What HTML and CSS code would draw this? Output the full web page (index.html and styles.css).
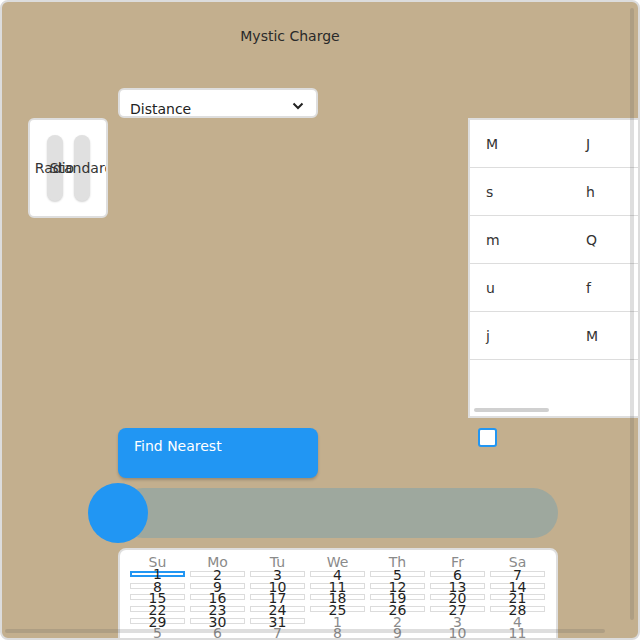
FILE: index.html
```html
<!DOCTYPE html>
<html>
<head>
<meta charset="utf-8">
<link rel="stylesheet" href="styles.css">
</head>
<body>
<div class="frame">
  <h1 class="title">Mystic Charge</h1>

  <div class="row-select">
    <div class="select">
      <span>Distance</span>
      <svg class="chevron" width="12" height="8" viewBox="0 0 12 8"><polyline points="1.5,1.5 6,6 10.5,1.5" fill="none" stroke="#222" stroke-width="2"/></svg>
    </div>
  </div>

  <div class="row-main">
    <div class="toggles">
      <div class="switch"><span>Radio</span></div>
      <div class="switch"><span>Standard</span></div>
    </div>
    <div class="list">
      <div class="grid">
        <div class="cell">M</div><div class="cell">J</div>
        <div class="cell">s</div><div class="cell">h</div>
        <div class="cell">m</div><div class="cell">Q</div>
        <div class="cell">u</div><div class="cell">f</div>
        <div class="cell">j</div><div class="cell">M</div>
      </div>
      <div class="list-thumb"></div>
    </div>
  </div>

  <div class="row-btn">
    <button class="btn">Find Nearest</button>
    <div class="check"></div>
  </div>

  <div class="slider">
    <div class="track"></div>
    <div class="thumb"></div>
  </div>

  <div class="calendar">
    <div class="cal-head">
      <span>Su</span><span>Mo</span><span>Tu</span><span>We</span><span>Th</span><span>Fr</span><span>Sa</span>
    </div>
    <div class="cal-grid">
      <div class="day sel">1</div><div class="day">2</div><div class="day">3</div><div class="day">4</div><div class="day">5</div><div class="day">6</div><div class="day">7</div>
      <div class="day">8</div><div class="day">9</div><div class="day">10</div><div class="day">11</div><div class="day">12</div><div class="day">13</div><div class="day">14</div>
      <div class="day">15</div><div class="day">16</div><div class="day">17</div><div class="day">18</div><div class="day">19</div><div class="day">20</div><div class="day">21</div>
      <div class="day">22</div><div class="day">23</div><div class="day">24</div><div class="day">25</div><div class="day">26</div><div class="day">27</div><div class="day">28</div>
      <div class="day">29</div><div class="day">30</div><div class="day">31</div><div class="day other">1</div><div class="day other">2</div><div class="day other">3</div><div class="day other">4</div>
      <div class="day other">5</div><div class="day other">6</div><div class="day other">7</div><div class="day other">8</div><div class="day other">9</div><div class="day other">10</div><div class="day other">11</div>
    </div>
  </div>

  <div class="vscroll"></div>
  <div class="hscroll"></div>
</div>
</body>
</html>
```

FILE: styles.css
```css
* { box-sizing: border-box; }
html, body { margin: 0; padding: 0; }
body {
  font-family: "DejaVu Sans", sans-serif;
  font-size: 14px;
  color: #222;
  background: #fff;
}
.frame {
  position: relative;
  width: 640px;
  height: 640px;
  border: 2px solid #dcdcdc;
  border-radius: 8px;
  background: #c3af8e;
  overflow: hidden;
}
.title {
  margin: 24px 0 0 0;
  width: 576px;
  text-align: center;
  font-size: 14px;
  font-weight: normal;
  line-height: 20px;
  height: 20px;
  color: #2a2a2a;
}
.row-select {
  margin-top: 42px;
  display: flex;
}
.select {
  margin-left: 116px;
  width: 200px;
  height: 30px;
  background: #fff;
  border: 2px solid #dedede;
  border-radius: 6px;
  padding: 10px 12px 0 10px;
  display: flex;
  justify-content: space-between;
  align-items: flex-start;
  align-self: flex-start;
  line-height: 18px;
  overflow: hidden;
  flex-shrink: 0;
}
.select span { height: 18px; display: block; }
.chevron { display: block; margin-top: 2px; }
.row-main {
  display: flex;
  align-items: flex-start;
}
.toggles {
  margin-left: 26px;
  width: 80px;
  height: 100px;
  flex-shrink: 0;
  background: #fff;
  border: 2px solid #dedede;
  border-radius: 6px;
  display: flex;
  justify-content: center;
  align-items: center;
  gap: 11px;
  overflow: hidden;
}
.switch {
  width: 16px;
  height: 66px;
  flex-shrink: 0;
  border-radius: 8px;
  background: #e0e0e0;
  box-shadow: 0 1px 2px rgba(0,0,0,0.18);
  display: flex;
  justify-content: center;
  align-items: center;
}
.switch span {
  white-space: nowrap;
  color: #333;
  flex-shrink: 0;
}
.list {
  position: relative;
  margin-left: 360px;
  width: 200px;
  height: 300px;
  background: #fff;
  border: 2px solid #dedede;
  flex-shrink: 0;
}
.grid {
  display: grid;
  grid-template-columns: 100px 100px;
}
.cell {
  height: 48px;
  border-bottom: 1px solid #dddddd;
  padding-left: 16px;
  display: flex;
  align-items: center;
  color: #333;
}
.list-thumb {
  position: absolute;
  left: 4px;
  bottom: 4px;
  width: 75px;
  height: 4px;
  border-radius: 2px;
  background: #d0d0d0;
}
.row-btn {
  margin-top: 10px;
  display: flex;
  align-items: flex-start;
}
.btn {
  margin-left: 116px;
  width: 200px;
  height: 50px;
  flex-shrink: 0;
  border: none;
  border-radius: 8px;
  background: #2196f3;
  color: #fff;
  font-family: "DejaVu Sans", sans-serif;
  font-size: 14px;
  line-height: 20px;
  text-align: left;
  padding: 8px 16px 0 16px;
  display: flex;
  align-items: flex-start;
  box-shadow: 0 2px 3px rgba(0,0,0,0.2);
}
.check {
  margin-left: 160px;
  width: 19px;
  height: 19px;
  flex-shrink: 0;
  background: #fff;
  border: 2px solid #2196f3;
  border-radius: 3px;
}
.slider {
  position: relative;
  margin-top: 5px;
  margin-left: 86px;
  width: 470px;
  height: 60px;
  padding-top: 5px;
}
.track {
  margin-left: 30px;
  width: 440px;
  height: 50px;
  border-radius: 25px;
  background: #9ea89e;
}
.thumb {
  position: absolute;
  left: 0;
  top: 0;
  width: 60px;
  height: 60px;
  border-radius: 50%;
  background: #2196f3;
}
.calendar {
  margin-top: 5px;
  margin-left: 116px;
  width: 440px;
  height: 120px;
  background: #fff;
  border: 2px solid #dedede;
  border-radius: 8px;
  padding: 5px 11px 0 10px;
}
.cal-head {
  display: grid;
  grid-template-columns: repeat(7, 55px);
  column-gap: 5px;
  height: 14px;
  line-height: 14px;
  text-align: center;
  color: #8a8a8a;
}
.cal-grid {
  margin-top: 2px;
  display: grid;
  grid-template-columns: repeat(7, 55px);
  column-gap: 5px;
  row-gap: 5.67px;
}
.day {
  height: 6px;
  line-height: 6px;
  border: 1px solid #dcdcdc;
  text-align: center;
  color: #1f1f1f;
  white-space: nowrap;
}
.day.sel { border: 2px solid #2196f3; line-height: 2px; }
.day.other { border-color: transparent; color: #8a8a8a; }
.vscroll {
  position: absolute;
  right: 4px;
  top: 6px;
  width: 4px;
  height: 612px;
  border-radius: 2px;
  background: rgba(90,90,90,0.2);
}
.hscroll {
  position: absolute;
  left: 3px;
  bottom: 5px;
  width: 600px;
  height: 4px;
  border-radius: 2px;
  background: rgba(90,90,90,0.2);
}
```
